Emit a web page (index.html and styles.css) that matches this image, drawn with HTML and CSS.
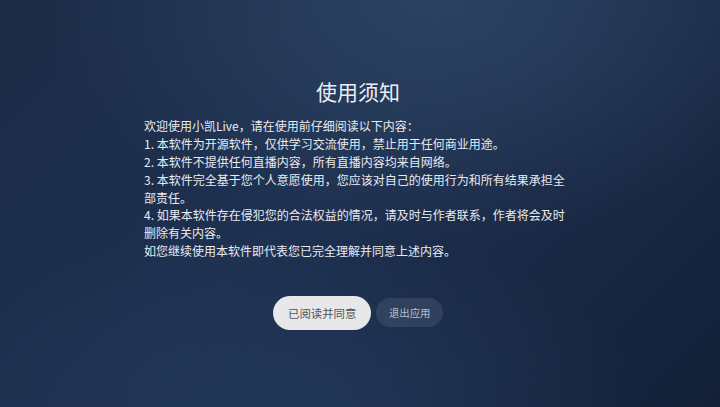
FILE: index.html
```html
<!DOCTYPE html>
<html lang="zh-CN">
<head>
<meta charset="utf-8">
<title>使用须知</title>
<link rel="stylesheet" href="styles.css">
</head>
<body>
<main class="screen">
  <section class="notice">
    <h1 class="title">使用须知</h1>
    <div class="content">
      <p>欢迎使用小凯Live，请在使用前仔细阅读以下内容：</p>
      <p>1. 本软件为开源软件，仅供学习交流使用，禁止用于任何商业用途。</p>
      <p>2. 本软件不提供任何直播内容，所有直播内容均来自网络。</p>
      <p>3. 本软件完全基于您个人意愿使用，您应该对自己的使用行为和所有结果承担全部责任。</p>
      <p>4. 如果本软件存在侵犯您的合法权益的情况，请及时与作者联系，作者将会及时删除有关内容。</p>
      <p>如您继续使用本软件即代表您已完全理解并同意上述内容。</p>
    </div>
    <div class="actions">
      <button class="btn btn-primary">已阅读并同意</button>
      <button class="btn btn-secondary">退出应用</button>
    </div>
  </section>
</main>
</body>
</html>
```
FILE: styles.css
```css
html, body {
  margin: 0;
  padding: 0;
  height: 100%;
}
body {
  font-family: "Noto Sans CJK SC", "Noto Sans", sans-serif;
  background-color: #1a2a45;
  background-image:
    radial-gradient(ellipse 55% 60% at 60% 0%, rgba(46, 68, 100, 0.9), rgba(46, 68, 100, 0) 100%),
    radial-gradient(ellipse 50% 45% at 40% 100%, rgba(36, 58, 92, 0.8), rgba(36, 58, 92, 0) 100%),
    linear-gradient(135deg, #1b2b46 0%, #1e3050 45%, #132038 100%);
  overflow: hidden;
}
.screen {
  height: 100%;
  display: flex;
  align-items: center;
  justify-content: center;
}
.notice {
  display: flex;
  flex-direction: column;
  align-items: center;
  transform: translate(-2px, 0);
}
.title {
  margin: 0 0 12px;
  font-size: 21px;
  line-height: 28px;
  font-weight: 400;
  color: #eceef2;
}
.content {
  width: 428px;
  color: #e8ebf0;
  font-size: 12px;
  line-height: 17.8px;
}
.content p {
  margin: 0;
}
.actions {
  margin-top: 36px;
  display: flex;
  align-items: center;
  gap: 5px;
}
.btn {
  border: none;
  border-radius: 999px;
  font-family: inherit;
  padding: 0;
  cursor: pointer;
}
.btn-primary {
  height: 34px;
  padding: 0 15px;
  background: #e8e8ea;
  color: #505359;
  font-size: 11.4px;
}
.btn-secondary {
  height: 29px;
  padding: 0 12.5px;
  background: rgba(255, 255, 255, 0.09);
  color: #b5bdc9;
  font-size: 10.4px;
}
```
